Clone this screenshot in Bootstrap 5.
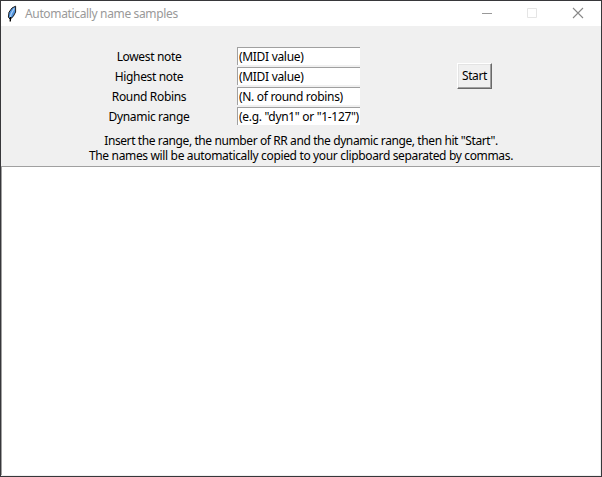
<!DOCTYPE html>
<html lang="en">
<head>
<meta charset="utf-8">
<title>Automatically name samples</title>
<link href="https://cdn.jsdelivr.net/npm/bootstrap@5.3.0/dist/css/bootstrap.min.css" rel="stylesheet">
<style>
body{font:12px/15px "Noto Sans","Open Sans",sans-serif;color:#000;background:#fff}
.app-window{width:602px;height:477px;border:1px solid #37373a;background:#f0f0f0}
.title-bar{height:25px;background:#fff;color:#999;padding-left:5px}
.title-text{margin-left:7px;letter-spacing:-.35px}
.controls{height:140px}
.form-area{padding-top:20px;height:105px}
.labels{width:236px;padding-left:60px;padding-top:2px}
.labels label,.field{height:18px;line-height:18px;margin-bottom:2px;white-space:nowrap}
.labels label{text-align:center;letter-spacing:-.34px}
.fields{width:123px;padding-top:1px}
.field{width:123px;border:0;border-top:1px solid #a0a0a0;border-left:1px solid #a0a0a0;border-radius:0;padding:0 0 0 1px;background:#fff;color:#000;font-size:12px;letter-spacing:-.31px;box-shadow:none!important}
.start-btn{width:35px;height:26px;margin:17px 0 0 97px;padding:0;border:1px solid;border-color:#fff #696969 #696969 #fff;border-radius:0;box-shadow:inset -1px -1px #a0a0a0,inset 1px 1px #e3e3e3;font-size:12px;line-height:22px;background:#f0f0f0;color:#000;letter-spacing:-.35px}
.help-text{padding-top:2px;white-space:nowrap}
.help-text div{height:15px;line-height:15px}
.output-area{border-top:1px solid #a0a0a0;border-left:1px solid #a0a0a0;margin-right:1px;margin-bottom:1px;background:#fff}
.l1{letter-spacing:-.4px}
.l2{letter-spacing:-.345px}
</style>
</head>
<body>
<main class="app-window d-flex flex-column overflow-hidden">
 <header class="title-bar d-flex align-items-center">
  <svg width="12" height="18" viewBox="0 0 12 18"><path d="M9.6 1.2 6 3 3 7.2 2.4 12 4 14.2 7.2 11.5 9.6 7Z" fill="#4f92dc" stroke="#1b1b1b"/><path d="M8.3 3.2 5.3 8.5 4.2 12" fill="none" stroke="#a9d0fa" stroke-width="1.2"/><path d="M4.6 12 4.2 16.5" stroke="#000" stroke-width="1.4"/></svg>
  <span class="title-text">Automatically name samples</span>
  <svg class="ms-auto" width="120" height="25" viewBox="481 1 120 25" fill="none"><path d="M482 13.5h10" stroke="#999"/><path d="M527.5 8.5h9v9h-9z" stroke="#e5e5e5"/><path d="m573 8 10 10m0-10-10 10" stroke="#888" stroke-width="1.1"/></svg>
 </header>
 <section class="controls">
  <div class="form-area d-flex align-items-start">
   <div class="labels d-flex flex-column"><label for="low">Lowest note</label><label for="high">Highest note</label><label for="rr">Round Robins</label><label for="dyn">Dynamic range</label></div>
   <div class="fields d-flex flex-column">
    <input id="low" class="form-control field" value="(MIDI value)"><input id="high" class="form-control field" value="(MIDI value)"><input id="rr" class="form-control field" value="(N. of round robins)"><input id="dyn" class="form-control field" value='(e.g. "dyn1" or "1-127")'>
   </div>
   <button class="btn start-btn">Start</button>
  </div>
  <div class="help-text text-center"><div class="l1">Insert the range, the number of RR and the dynamic range, then hit "Start".</div><div class="l2">The names will be automatically copied to your clipboard separated by commas.</div></div>
 </section>
 <div class="output-area flex-grow-1"></div>
</main>
<script src="https://cdn.jsdelivr.net/npm/bootstrap@5.3.0/dist/js/bootstrap.bundle.min.js"></script>
</body>
</html>
